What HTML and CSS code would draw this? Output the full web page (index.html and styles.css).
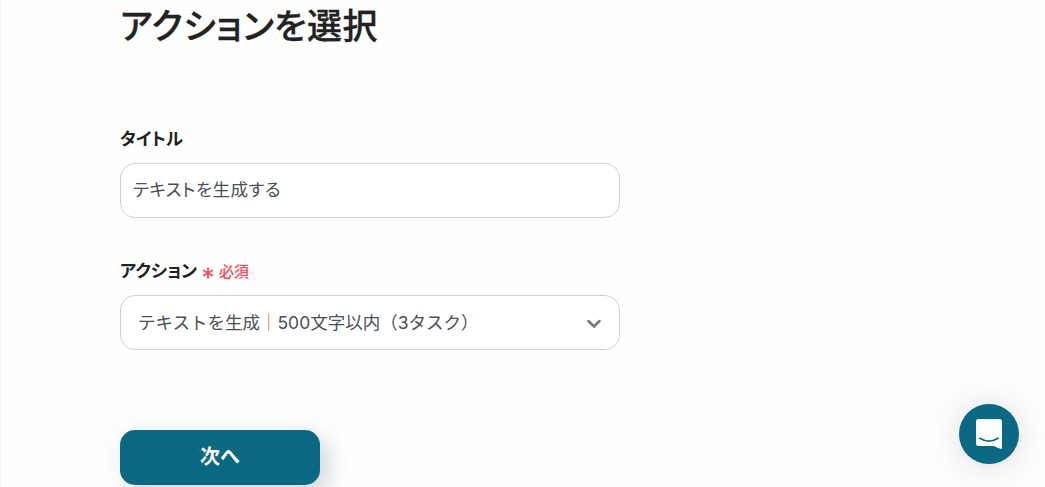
FILE: index.html
```html
<!DOCTYPE html>
<html lang="ja">
<head>
    <meta charset="UTF-8">
    <meta name="viewport" content="width=device-width, initial-scale=1.0">
    <title>アクションを選択</title>
    <link rel="stylesheet" href="styles.css">
</head>
<body>

    <main class="container">
        <h1 class="heading">アクションを選択</h1>

        <form class="action-form">
            <!-- Title -->
            <div class="field">
                <label class="field-label" for="title">タイトル</label>
                <input class="text-input" type="text" id="title" value="テキストを生成する">
            </div>

            <!-- Action -->
            <div class="field">
                <div class="field-label">アクション<span class="required"><svg class="asterisk" viewBox="0 0 12 12"><path d="M6 .5v11M1 3.200l10 5.600M11 3.200L1 8.800"/></svg>必須</span></div>
                <div class="select">
                    <span class="select-value">テキストを生成<span class="divider">｜</span>500文字以内（3タスク）</span>
                    <svg class="chevron" viewBox="0 0 14 10"><path d="M1.500 2L7 7.500 12.500 2"/></svg>
                </div>
            </div>

            <button class="next-button" type="button">次へ</button>
        </form>
    </main>

    <!-- Chat launcher -->
    <button class="chat-button" type="button" aria-label="チャット">
        <svg viewBox="0 0 28 32"><path class="bubble" d="M3.500 1h21a2.500 2.500 0 0 1 2.500 2.500V31q-4-.6-8-3H3.500A2.500 2.500 0 0 1 1 25.500v-22A2.500 2.500 0 0 1 3.500 1z"/><path class="smile" d="M5 20.300q9 5.800 18 0"/></svg>
    </button>

</body>
</html>
```
FILE: styles.css
```css
* {
    box-sizing: border-box;
}

body {
    margin: 0;
    height: 487px;
    overflow: hidden;
    border-left: 1px solid #f3f3f3;
    background: #fefefe;
    color: #222;
    font-family: Inter, "Noto Sans CJK JP", sans-serif;
}

.container {
    width: 500px;
    margin-left: 119px;
}

.heading {
    margin: 0;
    padding-top: 1px;
    height: 127px;
    font-size: 35px;
    line-height: 50px;
    font-weight: 500;
    font-feature-settings: "palt";
    letter-spacing: 0.5px;
    -webkit-text-stroke: 0.3px #222;
}

.field {
    margin-bottom: 39px;
}

.field-label {
    display: flex;
    align-items: center;
    height: 24px;
    margin-bottom: 12px;
    font-size: 17.4px;
    font-weight: 700;
    line-height: 22px;
    font-feature-settings: "palt";
}

.field + .field {
    margin-top: 41px;
}

.required {
    display: flex;
    align-items: center;
    margin-left: 5px;
    padding-top: 2px;
    color: #ff4b55;
    font-size: 15px;
    font-weight: 500;
}

.asterisk {
    width: 12px;
    height: 12px;
    margin: 2px 5px 0 0;
    fill: none;
    stroke: #ff4b55;
    stroke-width: 1.8;
}

.text-input,
.select {
    width: 500px;
    height: 55px;
    border: 1px solid #ced0d8;
    border-radius: 15px;
    background: #fff;
    color: #495057;
    font-family: inherit;
    font-size: 17.6px;
}

.text-input {
    display: block;
    padding: 0 12px 5px;
    font-feature-settings: "palt";
    letter-spacing: 0.4px;
}

.select {
    display: flex;
    align-items: center;
    justify-content: space-between;
    padding: 0 17px;
    font-size: 17.5px;
}

.select-value {
    padding-bottom: 3px;
}

.divider {
    color: #d97820;
    font-weight: 500;
}

.chevron {
    width: 14px;
    height: 10px;
    margin: 2px 1px 0 0;
    fill: none;
    stroke: #777;
    stroke-width: 2.5;
    stroke-linecap: round;
}

.next-button {
    display: block;
    width: 200px;
    height: 55px;
    margin-top: 80px;
    padding-bottom: 5px;
    border: none;
    border-radius: 15px;
    background: #0b6883;
    box-shadow: 10px 10px 20px rgba(31, 52, 73, 0.15), 0 0 30px rgba(11, 104, 131, 0.08);
    color: #fff;
    font-family: inherit;
    font-size: 20px;
    font-weight: 700;
    cursor: pointer;
}

/* Floats above the page in the corner */
.chat-button {
    position: fixed;
    right: 26px;
    bottom: 23px;
    display: flex;
    align-items: center;
    justify-content: center;
    width: 60px;
    height: 60px;
    padding: 0;
    border: none;
    border-radius: 50%;
    background: #0b6883;
    box-shadow: 0 1px 6px rgba(0, 0, 0, 0.06), 0 2px 40px rgba(0, 0, 0, 0.13);
    cursor: pointer;
}

.chat-button svg {
    width: 28px;
    height: 32px;
}

.bubble {
    fill: #fff;
}

.smile {
    fill: none;
    stroke: #0b6883;
    stroke-width: 1.8;
    stroke-linecap: round;
}
```
